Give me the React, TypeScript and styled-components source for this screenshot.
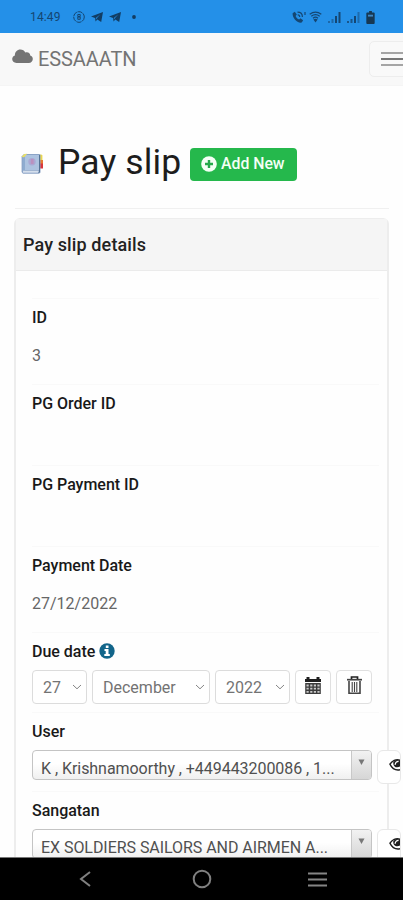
import React from 'react';
import styled, { createGlobalStyle } from 'styled-components';

const GlobalStyle = createGlobalStyle`
  *, *::before, *::after { box-sizing: border-box; }
  body { margin: 0; background: #fff; overflow: hidden; font-family: Roboto, sans-serif; }
`;

const Screen = styled.div`
  width: 403px;
  height: 900px;
  display: flex;
  flex-direction: column;
  overflow: hidden;
  background: #fefefe;
`;

const StatusBar = styled.header`
  flex: 0 0 33px;
  display: flex;
  align-items: center;
  justify-content: space-between;
  padding: 1px 28px 0 30px;
  background: #2490e8;
  color: #154672;
`;

const StatusGroup = styled.div<{ $gap: number }>`
  display: flex;
  align-items: center;
  gap: ${(p) => p.$gap}px;
  svg { display: block; }
`;

const Clock = styled.span`
  font-size: 12px;
  line-height: 16px;
  letter-spacing: 0.15px;
  width: 37px;
`;

const DotSlot = styled.span`
  margin-left: 5px;
`;

const NavBar = styled.nav`
  flex: 0 0 53px;
  display: flex;
  align-items: center;
  justify-content: space-between;
  padding-left: 12px;
  background: #f8f8f8;
  border-bottom: 1px solid #f5f5f5;
`;

const Brand = styled.div`
  display: flex;
  align-items: center;
  gap: 5px;
  color: #747474;
  font-size: 20px;
  line-height: 24px;
  letter-spacing: -0.1px;
  svg { display: block; margin-top: -6px; }
`;

const MenuButton = styled.button`
  width: 46px;
  height: 36px;
  margin-right: -12px;
  padding: 0 0 0 11px;
  display: flex;
  flex-direction: column;
  justify-content: center;
  gap: 4px;
  background: #f9f9f9;
  border: 1px solid #ededed;
  border-radius: 5px;
`;

const MenuLine = styled.span<{ $dark?: boolean }>`
  height: 2px;
  width: 24px;
  background: ${(p) => (p.$dark ? '#777' : '#a5a5a5')};
`;

const Content = styled.main`
  flex: 1;
  min-height: 0;
  padding: 53px 14px 0 14px;
  overflow: hidden;
`;

const TitleRow = styled.div`
  height: 70px;
  display: flex;
  align-items: flex-start;
  margin-left: 1px;
  padding-left: 5px;
  border-bottom: 1px solid #f0f0f0;
  svg { display: block; }
`;

const TitleIcon = styled.span`
  width: 38px;
  padding-top: 13px;
`;

const Title = styled.h1`
  margin: 0;
  width: 132px;
  font-size: 35.5px;
  font-weight: 400;
  line-height: 46px;
  letter-spacing: 0.1px;
  white-space: nowrap;
  color: #1d1d1d;
`;

const AddButton = styled.button`
  width: 107px;
  height: 33px;
  margin-top: 9px;
  padding: 0 0 2px 11px;
  display: flex;
  align-items: center;
  gap: 4px;
  border: 0;
  border-radius: 4px;
  background: #25b84c;
  color: #f4fff6;
  font: 500 15.8px/20px Roboto, sans-serif;
  white-space: nowrap;
`;

const Panel = styled.section`
  margin-top: 9px;
  border: 1px solid #ededed;
  border-width: 1px 2px;
  border-radius: 6px 6px 0 0;
`;

const PanelHeader = styled.h2`
  margin: 0;
  height: 52px;
  padding: 0 7px;
  font-size: 18px;
  font-weight: 500;
  letter-spacing: 0.12px;
  line-height: 52px;
  color: #222;
  background: #f5f5f5;
  border-bottom: 1px solid #ebebeb;
`;

const PanelBody = styled.div`
  padding: 27px 0 0 16px;
`;

const Row = styled.div<{ $height: number }>`
  height: ${(p) => p.$height}px;
  padding-top: 9px;
  margin-right: 8px;
  border-top: 1px solid #f9f9f9;
`;

const Label = styled.div`
  display: flex;
  align-items: center;
  gap: 4px;
  height: 20px;
  font-size: 16px;
  font-weight: 500;
  letter-spacing: -0.02px;
  line-height: 20px;
  color: #191919;
  svg { display: block; margin-top: -2px; }
`;

const Value = styled.div`
  margin-top: 18px;
  font-size: 16px;
  line-height: 20px;
  letter-spacing: 0;
  color: #666;
`;

const DateControls = styled.div`
  display: flex;
  margin-top: 8px;
`;

const DateSelect = styled.div<{ $width: number }>`
  width: ${(p) => p.$width}px;
  height: 34px;
  margin-right: 5px;
  padding: 0 4px 0 10px;
  display: flex;
  align-items: center;
  justify-content: space-between;
  border: 1px solid #dcdcdc;
  border-radius: 4px;
  background: #fff;
  color: #737373;
  font-size: 16px;
  letter-spacing: 0;
  svg { display: block; }
`;

const IconButton = styled.button`
  width: 36px;
  height: 34px;
  margin-right: 5px;
  padding: 0 0 4px;
  display: flex;
  align-items: center;
  justify-content: center;
  flex-shrink: 0;
  border: 1px solid #e0e0e0;
  border-radius: 4px;
  background: #fff;
  color: #2b2b2b;
  svg { display: block; }
`;

const PickerRow = styled.div`
  display: flex;
  align-items: flex-start;
  gap: 5px;
  width: 370px;
  margin-top: 8px;
`;

const Picker = styled.div`
  width: 340px;
  height: 30px;
  display: flex;
  border: 1px solid #c4c4c4;
  border-radius: 4px;
  background: linear-gradient(#fff 45%, #f0f0f0);
  overflow: hidden;
`;

const PickerText = styled.span<{ $spacing: number }>`
  flex: 1;
  padding: 5px 0 0 8px;
  font-size: 16px;
  line-height: 26px;
  letter-spacing: ${(p) => p.$spacing}px;
  white-space: nowrap;
  color: #505050;
`;

const PickerArrow = styled.span`
  width: 20px;
  padding: 8px 0 0 6px;
  border-left: 1px solid #c8c8c8;
  background: linear-gradient(#f2f2f2, #d6d6d6);
  svg { display: block; }
`;

const ViewButton = styled.button`
  width: 24px;
  height: 34px;
  padding: 0 0 5px 11px;
  display: flex;
  align-items: center;
  border: 1px solid #e8e8e8;
  border-radius: 6px;
  background: #fff;
  overflow: hidden;
  svg { display: block; flex-shrink: 0; }
`;

const SystemNav = styled.footer`
  flex: 0 0 43px;
  display: grid;
  grid-template-columns: 170px 63px 168px;
  align-items: center;
  justify-items: center;
  background: #000;
  border-top: 1px solid #777;
  svg { display: block; }
`;

const PhoneIcon = () => (
  <svg width="14" height="13" viewBox="0 0 14 13" fill="none" stroke="currentColor">
    <path d="M.6 2.2 2.8.7l2 2.9-1.2 1.3c.8 1.8 1.8 2.8 3.6 3.6l1.2-1.3 2.7 2-1.3 2.3C5.2 12.6.2 6.8.6 2.2Z" fill="currentColor" stroke="none" />
    <path d="M5.5 1.2c3 0 4.9 2 4.9 4.8M5.7 3.9c1.2 0 2 .7 2 2M13 1v3" strokeWidth="1.2" />
  </svg>
);

const WifiIcon = () => (
  <svg width="13" height="12" viewBox="0 0 13 12" fill="none" stroke="currentColor">
    <path d="M.7 3.2Q6.5-1 12.3 3.2M2.3 5.2q4.2-3 8.4 0M4 7.2q2.5-2 5 0" strokeWidth="1.2" />
    <path d="M6.5 11.5 4.4 8.4q2.1-1.3 4.2 0Z" fill="currentColor" stroke="none" />
  </svg>
);

const SignalIcon = ({ weak }: { weak?: boolean }) => (
  <svg width="13" height="11" viewBox="0 0 13 11" fill="currentColor">
    <path d="M0 9h2v2H0zM3.5 7h2v4h-2z" opacity={weak ? 0.8 : 0.55} />
    <path d="M7 4h2v7H7z" />
    <path d="M10.5 0h2v11h-2z" opacity={weak ? 0.5 : 1} />
  </svg>
);

const BatteryIcon = () => (
  <svg width="9" height="13" viewBox="0 0 9 14">
    <path d="M3 0h3v1.5h2A1 1 0 0 1 9 2.5V13a1 1 0 0 1-1 1H1a1 1 0 0 1-1-1V2.5a1 1 0 0 1 1-1h2Z" fill="#173853" />
    <path d="M1.8 4h5.4v2H1.8z" fill="#3e86c4" />
  </svg>
);

const CircleBadgeIcon = () => (
  <svg width="12" height="12" viewBox="0 0 12 12" fill="none" stroke="currentColor">
    <circle cx="6" cy="6" r="5.3" strokeWidth="1" strokeDasharray="5 .7" />
    <path d="M4.8 3.5h2.4v2H4.8zM4.8 6h2.4v2.3H4.8z" strokeWidth="1" />
  </svg>
);

const TelegramIcon = () => (
  <svg width="12" height="10" viewBox="0 0 12 10" fill="#123d63">
    <path d="M12 0 10.2 10 6.3 7.4 4.6 9.5 4 6 0 4.6ZM9.4 2.3 4.8 6l.2 1.6.8-1.3Z" />
  </svg>
);

const DotIcon = () => (
  <svg width="4" height="4" viewBox="0 0 4 4"><circle cx="2" cy="2" r="1.9" fill="#123c62" /></svg>
);

const CloudIcon = () => (
  <svg width="21" height="14" viewBox="0 0 21 14" fill="#747474">
    <path d="M4.5 14C1.8 14 .2 12.3.2 10.1c0-1.7 1.1-3.1 2.7-3.6C2.8 3 5.2.5 8.4.5c2.2 0 4 1.1 4.9 3 3-.9 5 1 4.9 3.1 1.6.4 2.6 1.8 2.6 3.5 0 2.4-1.7 3.9-4 3.9Z" />
  </svg>
);

const BookIcon = () => (
  <svg width="24" height="24" viewBox="0 0 24 24">
    <path d="M19 2.5h2.4l1 1V9H19Z" fill="#ead64e" />
    <path d="M19 8h4v4h-4Z" fill="#e67b32" />
    <path d="M19 11.5h4v5h-4Z" fill="#d9353c" />
    <path d="M4 2h15.5l1 1v17.5l-1.5 1.3H3L1.6 20V4.5Z" fill="#8ba3c6" />
    <path d="M5 3h14v15H5Z" fill="#adc3e0" />
    <path d="M2.5 4.5 5 3v15l-2.5.7Z" fill="#8eacd0" />
    <path d="m1.5 5 2.7-3 3-.2-3 3.4Z" fill="#e8df68" />
    <path d="M3 18.7h15.5v2H3Z" fill="#d5dfec" />
    <path d="M19.5 3v17l-1 1" fill="none" stroke="#557395" />
    <circle cx="12" cy="9.7" r="3.7" fill="#aaa8d3" />
    <path d="M10.8 7h2.8v5h-2.8z" fill="#ba91bf" />
  </svg>
);

const PlusCircleIcon = () => (
  <svg width="16" height="16" viewBox="0 0 16 16">
    <circle cx="8" cy="8" r="7.8" fill="#f4fff6" />
    <path d="M8 4v8M4 8h8" stroke="#25a94c" strokeWidth="2.4" />
  </svg>
);

const InfoIcon = () => (
  <svg width="16" height="16" viewBox="0 0 16 16">
    <circle cx="8" cy="8" r="7.7" fill="#12658a" />
    <path d="M6.8 2.5h2.7v2.4H6.8zM5.5 6h4v5h1.3v2H5.3v-2h1.4V8H5.5Z" fill="#fff" />
  </svg>
);

const ChevronIcon = () => (
  <svg width="10" height="6" viewBox="0 0 10 6" fill="none" stroke="#858585"><path d="m1 1 4 3.8L9 1" /></svg>
);

const CalendarIcon = () => (
  <svg width="16" height="17" viewBox="0 0 16 17">
    <path d="M0 2h1.5V0h3v2h7V0h3v2H16v3H0Z" fill="#202020" />
    <path d="M.2 6h15.6v11H.2Z" fill="#3c3c3c" />
    <path d="M1.5 7.5h2.2v2H1.5zm3.7 0h2.2v2H5.2zm3.6 0H11v2H8.8zm3.6 0h2.2v2h-2.2zM1.5 10.8h2.2v1.8H1.5zm3.7 0h2.2v1.8H5.2zm3.6 0H11v1.8H8.8zm3.6 0h2.2v1.8h-2.2zM1.5 13.9h2.2v1.8H1.5zm3.7 0h2.2v1.8H5.2zm3.6 0H11v1.8H8.8zm3.6 0h2.2v1.8h-2.2z" fill="#c9c9c9" />
  </svg>
);

const TrashIcon = () => (
  <svg width="15" height="18" viewBox="0 0 15 18" fill="none" stroke="#444">
    <path d="M4.5 3V1h6v2" stroke="#222" strokeWidth="1.7" />
    <path d="M0 3.7h15" strokeWidth="1.7" />
    <path d="M2 5v12.2h11V5" strokeWidth="1.6" />
    <path d="M5.2 6v10M7.5 6v10M9.8 6v10" strokeWidth="1.1" />
  </svg>
);

const EyeIcon = () => (
  <svg width="11" height="14" viewBox="0 0 11 14" fill="none" stroke="#1e1e1e">
    <path d="M11 2.2C7 .8 3 3 1 6.2c2 4.2 5.6 6.4 10 5.6" strokeWidth="1.5" />
    <path d="M4.3 4C3.8 9 7.5 10.3 11 8.6V2.4L7 2Z" fill="#1e1e1e" stroke="none" />
    <path d="M6 6.8c.4-2.2 2-3.4 3.6-3.4" stroke="#fff" strokeWidth="1.1" />
  </svg>
);

const ArrowIcon = () => (
  <svg width="7" height="6" viewBox="0 0 7 6"><path d="M.5.5h6L3.5 6Z" fill="#777" /></svg>
);

type PickerFieldProps = { label: string; text: string; spacing: number };

const PickerField = ({ label, text, spacing }: PickerFieldProps) => (
  <Row $height={79}>
    <Label>{label}</Label>
    <PickerRow>
      <Picker>
        <PickerText $spacing={spacing}>{text}</PickerText>
        <PickerArrow><ArrowIcon /></PickerArrow>
      </Picker>
      <ViewButton aria-label={`View ${label}`}><EyeIcon /></ViewButton>
    </PickerRow>
  </Row>
);

export default function App() {
  return (
    <Screen>
      <GlobalStyle />
      <StatusBar>
        <StatusGroup $gap={6}>
          <Clock>14:49</Clock>
          <CircleBadgeIcon />
          <TelegramIcon />
          <TelegramIcon />
          <DotSlot><DotIcon /></DotSlot>
        </StatusGroup>
        <StatusGroup $gap={6}>
          <StatusGroup $gap={3}><PhoneIcon /><WifiIcon /></StatusGroup>
          <SignalIcon />
          <SignalIcon weak />
          <BatteryIcon />
        </StatusGroup>
      </StatusBar>
      <NavBar>
        <Brand><CloudIcon />ESSAAATN</Brand>
        <MenuButton aria-label="Menu">
          <MenuLine />
          <MenuLine $dark />
          <MenuLine />
        </MenuButton>
      </NavBar>
      <Content>
        <TitleRow>
          <TitleIcon><BookIcon /></TitleIcon>
          <Title>Pay slip</Title>
          <AddButton><PlusCircleIcon />Add New</AddButton>
        </TitleRow>
        <Panel>
          <PanelHeader>Pay slip details</PanelHeader>
          <PanelBody>
            <Row $height={86}>
              <Label>ID</Label>
              <Value>3</Value>
            </Row>
            <Row $height={81}><Label>PG Order ID</Label></Row>
            <Row $height={81}><Label>PG Payment ID</Label></Row>
            <Row $height={86}>
              <Label>Payment Date</Label>
              <Value>27/12/2022</Value>
            </Row>
            <Row $height={80}>
              <Label>Due date<InfoIcon /></Label>
              <DateControls>
                <DateSelect $width={55}>27<ChevronIcon /></DateSelect>
                <DateSelect $width={118}>December<ChevronIcon /></DateSelect>
                <DateSelect $width={75}>2022<ChevronIcon /></DateSelect>
                <IconButton aria-label="Pick date"><CalendarIcon /></IconButton>
                <IconButton aria-label="Clear date"><TrashIcon /></IconButton>
              </DateControls>
            </Row>
            <PickerField label="User" text="K , Krishnamoorthy , +449443200086 , 1..." spacing={-0.05} />
            <PickerField label="Sangatan" text="EX SOLDIERS SAILORS AND AIRMEN A..." spacing={-0.05} />
          </PanelBody>
        </Panel>
      </Content>
      <SystemNav>
        <svg width="12" height="18" viewBox="0 0 12 18" fill="none" stroke="#808080" strokeWidth="2"><path d="M11 2 2 9l9 7" /></svg>
        <svg width="20" height="20" viewBox="0 0 20 20" fill="none" stroke="#808080" strokeWidth="2"><circle cx="10" cy="10" r="8.3" /></svg>
        <svg width="19" height="15" viewBox="0 0 19 15" stroke="#858585" strokeWidth="2"><path d="M0 1.5h19M0 7.5h19M0 13.5h19" /></svg>
      </SystemNav>
    </Screen>
  );
}
